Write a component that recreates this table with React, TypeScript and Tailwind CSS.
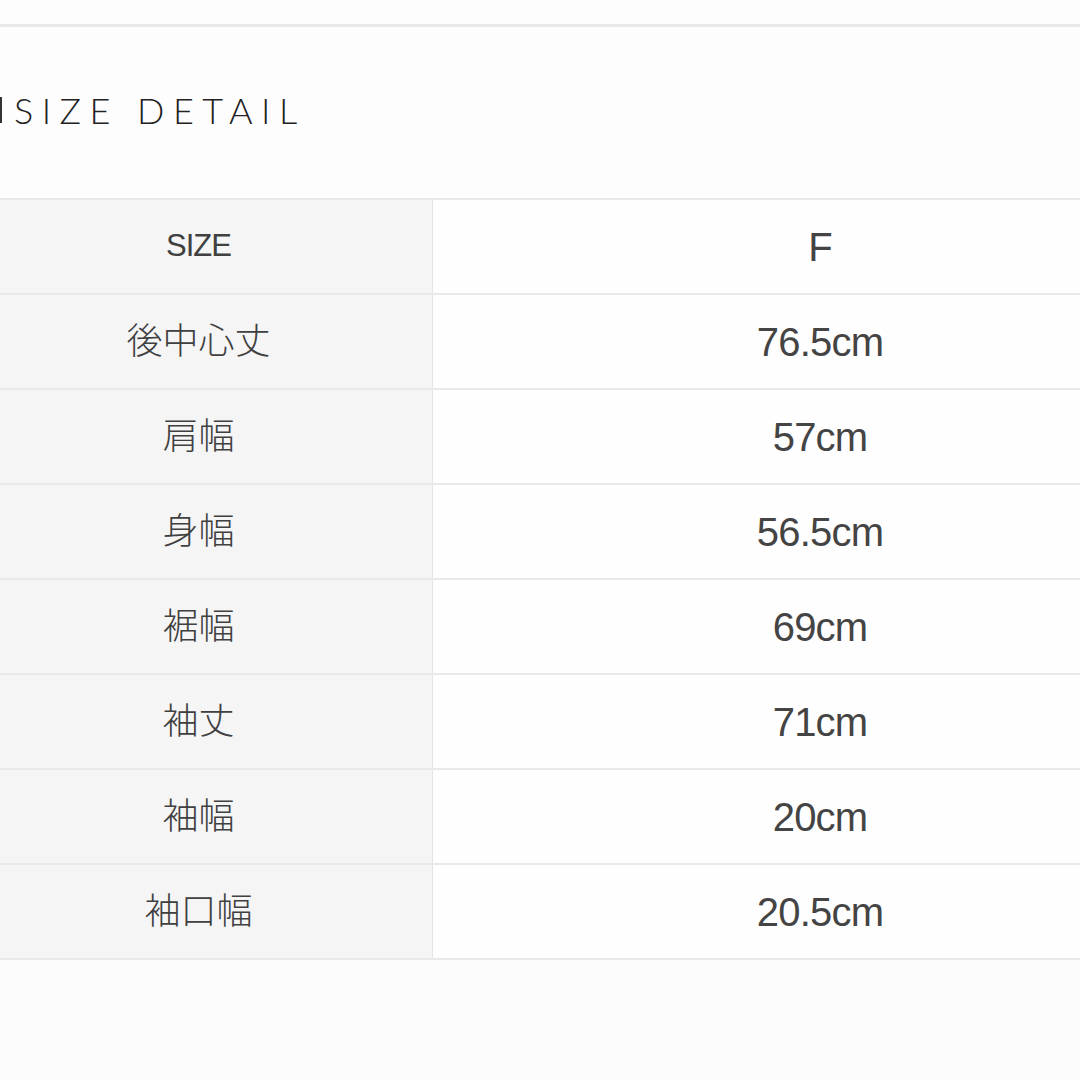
import React from "react";

const rows: [string, string][] = [
  ["後中心丈", "76.5cm"],
  ["肩幅", "57cm"],
  ["身幅", "56.5cm"],
  ["裾幅", "69cm"],
  ["袖丈", "71cm"],
  ["袖幅", "20cm"],
  ["袖口幅", "20.5cm"],
];

export default function App() {
  return (
    <div className="w-[1080px] h-[1080px] overflow-hidden bg-[#fcfcfc]">
      <div className="h-[24px] bg-[#fdfdfd]" />
      <div className="h-[3px] bg-[#e9e9ea]" />
      <div className="h-[171px] bg-[#fdfdfd] flex items-center pb-[2px]">
        <span className="inline-block w-[2px] h-[26px] bg-[#333] mt-[-4px]" />
        <h1
          className="ml-[12px] text-[36px] leading-none tracking-[0.235em] text-[#222] mt-[-4px] font-light"
          style={{ fontFamily: "Lato, 'Open Sans', sans-serif" }}
        >
          SIZE DETAIL
        </h1>
      </div>
      <div className="h-[2px] bg-[#e9e9ea]" />
      <div className="ml-[-35px] w-[1242px]">
        <Row label="SIZE" value="F" latin />
        {rows.map(([l, v]) => (
          <Row key={l} label={l} value={v} />
        ))}
      </div>
    </div>
  );
}

function Row({ label, value, latin }: { label: string; value: string; latin?: boolean }) {
  return (
    <div className="flex h-[95px] border-b-2 border-[#e9e9ea]">
      <div
        className={`w-[468px] flex items-center justify-center bg-[#f5f5f6] border-r border-[#e4e4e6] text-[#404040] ${
          latin ? "text-[31px] tracking-[-0.03em]" : "text-[36px]"
        }`}
        style={{ fontFamily: "'Liberation Sans', 'Noto Sans CJK JP', sans-serif", fontWeight: latin ? 400 : 300 }}
      >
        {label}
      </div>
      <div
        className="flex-1 flex items-center justify-center bg-[#fefefe] text-[40px] tracking-[-0.02em] text-[#444]"
        style={{ fontFamily: "'Liberation Sans', sans-serif" }}
      >
        {value}
      </div>
    </div>
  );
}
